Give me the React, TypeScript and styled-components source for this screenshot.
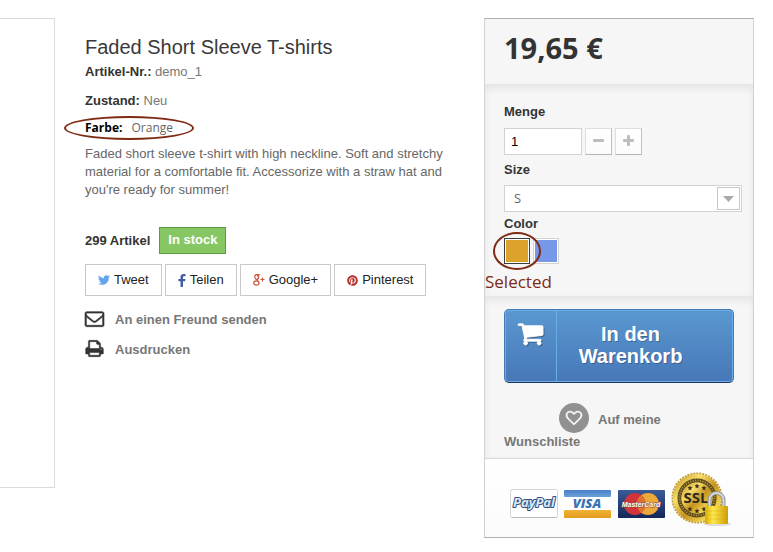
import React from "react";
import styled, { createGlobalStyle } from "styled-components";
import { FaTwitter, FaPinterest } from "react-icons/fa";

const GlobalStyle = createGlobalStyle`
  * { box-sizing: border-box; }
  body {
    margin: 0;
    background: #fff;
    color: #777;
    font: 13px/18px "Liberation Sans", Arial, sans-serif;
  }
  h1, p { margin: 0; }
  button, input, select { font: inherit; margin: 0; }
`;

const Page = styled.main`
  display: flex;
  align-items: flex-start;
  padding: 18px 19px 14px 0;
`;

const ImageFrame = styled.div`
  flex: 0 0 55px;
  height: 470px;
  margin-right: 30px;
  border: 1px solid #dbdbdb;
  border-left: 0;
`;

const Info = styled.section`
  flex: 1;
  min-width: 0;
  padding-top: 18px;
  margin-right: 30px;
`;

const Title = styled.h1`
  font-size: 20px;
  line-height: 22px;
  font-weight: 400;
  color: #3a3939;
  margin-bottom: 5px;
`;

const Fact = styled.p`
  margin-bottom: 11px;
  b { color: #333; }
`;

const ColorFact = styled.p`
  position: relative;
  width: fit-content;
  margin: -2px 0 8px;
  font: 12px/18px "Open Sans", sans-serif;
  color: #666;
  b { color: #000; margin-right: 6px; }
`;

const Ring = styled.span<{ $x: number; $y: number }>`
  position: absolute;
  inset: ${(p) => `-${p.$y}px -${p.$x}px`};
  z-index: 1;
  border: 2px solid #7e2a14;
  border-radius: 50%;
  pointer-events: none;
`;

const Description = styled.p`
  color: #666;
  margin-bottom: 28px;
`;

const Stock = styled.p`
  display: flex;
  align-items: center;
  gap: 9px;
  color: #333;
  font-weight: 700;
  margin-bottom: 10px;
`;

const StockBadge = styled.span`
  padding: 3px 8px 4px;
  line-height: 18px;
  color: #fff;
  background: #86c763;
  border: 1px solid #5f9a43;
`;

const ShareRow = styled.div`
  display: flex;
  flex-wrap: wrap;
  gap: 3px;
  margin-bottom: 15px;
`;

const ShareButton = styled.button<{ $tint: string }>`
  display: flex;
  align-items: center;
  gap: 4px;
  height: 32px;
  padding: 0 12px;
  color: #222;
  background: #fff;
  border: 1px solid #c9c9c9;
  svg { color: ${(p) => p.$tint}; }
`;

const ActionLink = styled.a`
  display: flex;
  align-items: center;
  gap: 11px;
  height: 18px;
  margin-bottom: 12px;
  color: #777;
  font-weight: 700;
  text-decoration: none;
  svg { color: #333; margin-bottom: 4px; }
`;

const BuyBox = styled.form`
  flex: 0 0 270px;
  background: #f6f6f6;
  border: 1px solid #d2d2d2;
  border-top-color: #b0b0b0;
  border-bottom-color: #b0b0b0;
`;

const Price = styled.p`
  padding: 9px 19px 16px;
  font: 700 29px/40px "Open Sans", sans-serif;
  color: #333;
`;

const Section = styled.div`
  padding: 13px 19px 0;
  box-shadow: inset 0 6px 6px rgba(0, 0, 0, 0.05), inset 0 0 6px rgba(0, 0, 0, 0.03);
`;

const Attributes = styled(Section)`
  padding-top: 19px;
`;

const Label = styled.label`
  display: block;
  margin-bottom: 7px;
  font-weight: 700;
  color: #333;
`;

const SizeLabel = styled(Label)`
  margin-bottom: 6px;
`;

const ColorLabel = styled(Label)`
  margin-bottom: 5px;
`;

const Quantity = styled.div`
  display: flex;
  gap: 3px;
  margin-bottom: 6px;
`;

const QuantityInput = styled.input`
  width: 78px;
  height: 27px;
  padding: 0 6px;
  color: #000;
  background: #fff;
  border: 1px solid #d2d2d2;
`;

const StepButton = styled.button`
  display: grid;
  place-items: center;
  width: 27px;
  height: 27px;
  padding: 0 0 2px;
  color: #bdbdbd;
  background: linear-gradient(#fff, #fbfbfb);
  border: 1px solid;
  border-color: #dedede #c1c1c1 #b5b5b5 #dedede;
`;

const SelectWrap = styled.div`
  position: relative;
  margin: 0 -8px 3px 0;
`;

const SizeSelect = styled.select`
  display: block;
  width: 100%;
  height: 27px;
  padding: 0 30px 2px 9px;
  appearance: none;
  color: #666;
  font: 13px/18px "Open Sans", sans-serif;
  background: #fff;
  border: 1px solid #d2d2d2;
  border-radius: 0;
`;

const SelectArrow = styled.span`
  position: absolute;
  top: 2px;
  right: 2px;
  display: grid;
  place-items: center;
  width: 23px;
  height: 23px;
  color: #a8a8a8;
  background: #fff;
  border: 1px solid #c8c8c8;
  pointer-events: none;
`;

const Swatches = styled.div`
  display: flex;
  gap: 3px;
  margin-bottom: 5px;
`;

const SwatchItem = styled.span`
  position: relative;
  display: flex;
`;

const Swatch = styled.button<{ $color: string; $selected?: boolean }>`
  width: 26px;
  height: 26px;
  padding: 1px;
  background: ${(p) => p.$color} content-box, #fff;
  border: 1px solid ${(p) => (p.$selected ? "#3d3d3d" : "#d2d2d2")};
`;

const Note = styled.p`
  margin-left: -19px;
  padding-bottom: 2px;
  font: 17px/25px "Open Sans", sans-serif;
  color: #7e2a14;
`;

const CartButton = styled.button`
  display: flex;
  width: 100%;
  padding: 0;
  text-align: center;
  color: #fff;
  font-size: 20px;
  line-height: 22px;
  font-weight: 700;
  text-shadow: 1px 1px rgba(0, 0, 0, 0.25);
  background: linear-gradient(#5a98d0, #4777b8);
  border: 1px solid #4379b5;
  border-bottom-color: #1b355c;
  border-radius: 5px;
  box-shadow: inset 0 0 0 1px #69aee6;
`;

const CartIconCell = styled.span`
  flex: 0 0 52px;
  padding: 10px 0 0;
  border-right: 1px solid #69aee6;
  svg { filter: drop-shadow(1px 1px rgba(0, 0, 0, 0.3)); }
`;

const CartText = styled.span`
  flex: 1;
  padding: 13px 38px 15px 9px;
`;

const Wishlist = styled.p`
  padding: 20px 0 7px;
  text-indent: 55px;
  a {
    color: #777;
    font-weight: 700;
    text-decoration: none;
  }
`;

const HeartBadge = styled.span`
  display: inline-grid;
  place-items: center;
  width: 30px;
  height: 30px;
  margin-right: 9px;
  text-indent: 0;
  vertical-align: -2px;
  color: #fff;
  background: #919191;
  border-radius: 50%;
`;

const Payments = styled.div`
  display: flex;
  align-items: center;
  gap: 5px;
  padding: 10px 19px 8px 25px;
  border-top: 1px solid #d8d8d8;
  background: linear-gradient(#fff, #fbfbfb);
`;

const Cards = styled.div`
  display: flex;
  gap: 5px;
  padding-top: 9px;
`;

const Glyph = ({ d, size, weight = 0 }: { d: string; size: number; weight?: number }) => (
  <svg
    width={size}
    height={size}
    viewBox="0 0 1792 1792"
    fill="currentColor"
    stroke="currentColor"
    strokeWidth={weight}
    overflow="visible"
    aria-hidden="true"
  >
    <path d={d} />
  </svg>
);

const HEART =
  "M1664 596q0-81-21.5-143t-55-98.5-81.5-59.5-94-31-98-8-112 25.5-110.5 64-86.5 72-60 61.5q-18 22-49 22t-49-22q-24-28-60-61.5t-86.5-72-110.5-64-112-25.5-98 8-94 31-81.5 59.5-55 98.5-21.5 143q0 168 187 355l581 560 580-559q188-188 188-356zm128 0q0 221-229 450l-623 600q-18 18-44 18t-44-18l-624-602q-10-8-27.5-26t-55.5-65.5-68-97.5-53.5-121-23.5-138q0-220 127-344t351-124q62 0 126.5 21.5t120 58 95.5 68.5 76 68q36-36 76-68t95.5-68.5 120-58 126.5-21.5q224 0 351 124t127 344z";
const ENVELOPE =
  "M1664 1504v-768q-32 36-69 66-268 206-426 338-51 43-83 67t-86.5 48.5-102.5 24.5h-2q-48 0-102.5-24.5t-86.5-48.5-83-67q-158-132-426-338-37-30-69-66v768q0 13 9.5 22.5t22.5 9.5h1472q13 0 22.5-9.5t9.5-22.5zm0-1051v-24.5l-.5-13-3-12.5-5.5-9-9-7.5-14-2.5h-1472q-13 0-22.5 9.5t-9.5 22.5q0 168 147 284 193 152 401 317 6 5 35 29.5t46 37.5 44.5 31.5 50.5 27.5 43 9h2q20 0 43-9t50.5-27.5 44.5-31.5 46-37.5 35-29.5q208-165 401-317 54-43 100.5-115.5t46.5-131.5zm128-37v1088q0 66-47 113t-113 47h-1472q-66 0-113-47t-47-113v-1088q0-66 47-113t113-47h1472q66 0 113 47t47 113z";
const PRINTER =
  "M448 1536h896v-256h-896v256zm0-640h896v-384h-160q-40 0-68-28t-28-68v-160h-640v640zm1152 64q0-26-19-45t-45-19-45 19-19 45 19 45 45 19 45-19 19-45zm128 0v416q0 13-9.5 22.5t-22.5 9.5h-224v160q0 40-28 68t-68 28h-960q-40 0-68-28t-28-68v-160h-224q-13 0-22.5-9.5t-9.5-22.5v-416q0-79 56.5-135.5t135.5-56.5h64v-544q0-40 28-68t68-28h672q40 0 88 20t76 48l152 152q28 28 48 76t20 88v256h64q79 0 135.5 56.5t56.5 135.5z";
const CART =
  "M704 1536q0 52-38 90t-90 38-90-38-38-90 38-90 90-38 90 38 38 90zm896 0q0 52-38 90t-90 38-90-38-38-90 38-90 90-38 90 38 38 90zm128-1088v512q0 24-16.5 42.5t-40.5 21.5l-1044 122q13 60 13 70 0 16-24 64h920q26 0 45 19t19 45-19 45-45 19h-1024q-26 0-45-19t-19-45q0-11 8-31.5t16-36 21.5-40 15.5-29.5l-177-823h-204q-26 0-45-19t-19-45 19-45 45-19h256q16 0 28.5 6.5t19.5 15.5 13 24.5 8 26 5.5 29.5 4.5 26h1201q26 0 45 19t19 45z";

const FacebookIcon = () => (
  <svg width="8" height="13" viewBox="0 0 8 13" fill="currentColor" aria-hidden="true">
    <path d="M7.500.2v2.100H6.200c-.9 0-1.200.5-1.200 1.200v1.400h2.400l-.3 2.300H5V13H2.500V7.200H.4V4.900h2.100V3.200C2.500 1.100 3.700 0 5.600 0c.9 0 1.600.1 1.900.2z" />
  </svg>
);

const GooglePlusIcon = () => (
  <svg width="12" height="12" viewBox="0 0 12 12" fill="none" stroke="currentColor" aria-hidden="true">
    <ellipse cx="3.6" cy="3" rx="1.7" ry="2.4" strokeWidth="1.2" transform="rotate(-14 3.6 3)" />
    <path d="M3.2.7h4M5 .8c1.2 1.4 1 3-.3 4.1-.8.7-.5 1.2.2 1.8" strokeWidth="1" />
    <ellipse cx="3.4" cy="9" rx="2.7" ry="2.1" strokeWidth="1.2" />
    <path d="M4 6.4l1.8 1.5M7.5 5.5h4M9.5 3.5v4" strokeWidth="1.1" />
  </svg>
);

const PayPalCard = () => (
  <svg width="49" height="30" viewBox="0 0 49 30" role="img" aria-label="PayPal">
    <rect x=".5" y=".5" width="47" height="28" rx="2" fill="#fff" stroke="#d3d6d9" />
    <path d="M2 28.5h45" stroke="#b8bcc1" />
    <text x="24" y="18" textAnchor="middle" fontFamily="Open Sans, sans-serif" fontSize="13" fontWeight="700" fontStyle="italic" fill="#dfe8f2" stroke="#2d4f84" strokeWidth="2" strokeLinejoin="round" paintOrder="stroke">
      PayPal
    </text>
  </svg>
);

const VisaCard = () => (
  <svg width="48" height="30" viewBox="0 0 48 30" role="img" aria-label="Visa">
    <defs>
      <linearGradient id="visaTop" x2="0" y2="1">
        <stop stopColor="#4a7fc6" />
        <stop offset="1" stopColor="#69a1d9" />
      </linearGradient>
      <linearGradient id="visaBottom" x2="0" y2="1">
        <stop stopColor="#f1b435" />
        <stop offset="1" stopColor="#e29b20" />
      </linearGradient>
    </defs>
    <rect y="1" width="47" height="28" rx="1" fill="#fff" />
    <rect y="1" width="47" height="7" rx="1" fill="url(#visaTop)" />
    <rect y="21" width="47" height="8" rx="1" fill="url(#visaBottom)" />
    <text x="23" y="19" textAnchor="middle" fontFamily="Open Sans, sans-serif" fontSize="13" fontWeight="800" fontStyle="italic" fill="#3a72b4">
      VISA
    </text>
  </svg>
);

const MasterCard = () => (
  <svg width="49" height="30" viewBox="0 0 49 30" role="img" aria-label="MasterCard">
    <defs>
      <linearGradient id="mcBlue" x2="0" y2="1">
        <stop stopColor="#3a5b98" />
        <stop offset="1" stopColor="#14265a" />
      </linearGradient>
    </defs>
    <rect x="1" y="1" width="47" height="28" rx="1" fill="url(#mcBlue)" />
    <circle cx="18" cy="15" r="11" fill="#d3343c" />
    <circle cx="31" cy="15" r="11" fill="#eda83a" />
    <path d="M24.5 6.1a11 11 0 0 1 0 17.8 11 11 0 0 1 0-17.8z" fill="#dd7132" />
    <text x="24" y="18" textAnchor="middle" fontFamily="Liberation Sans, sans-serif" fontSize="7" fontWeight="700" fontStyle="italic" fill="#fff" stroke="#8d4a35" strokeWidth="1" paintOrder="stroke">
      MasterCard
    </text>
  </svg>
);

const SslSeal = () => (
  <svg width="62" height="60" viewBox="0 0 62 60" role="img" aria-label="SSL">
    <defs>
      <linearGradient id="sealGold" x2="1" y2="1">
        <stop stopColor="#b78a1d" />
        <stop offset=".3" stopColor="#f7df6b" />
        <stop offset=".55" stopColor="#c4921c" />
        <stop offset=".8" stopColor="#f2d452" />
        <stop offset="1" stopColor="#a3740f" />
      </linearGradient>
      <linearGradient id="lockGold">
        <stop stopColor="#d9aa08" />
        <stop offset=".35" stopColor="#ffe94a" />
        <stop offset="1" stopColor="#cf9c05" />
      </linearGradient>
    </defs>
    <circle cx="26" cy="29" r="24.500" fill="none" stroke="#c09a2b" strokeWidth="2" strokeDasharray="2 1" />
    <circle cx="26" cy="29" r="24" fill="url(#sealGold)" />
    <circle cx="26" cy="29" r="17.500" fill="none" stroke="#5c4a1c" strokeWidth="4" />
    <circle cx="26" cy="29" r="17.500" fill="none" stroke="#b99a3f" strokeWidth="2" strokeDasharray="1 1.500" />
    <circle cx="26" cy="29" r="15.500" fill="url(#sealGold)" />
    <g fill="#40331a">
      {[[19, 19], [26, 17], [33, 19], [19, 40], [26, 42], [33, 40]].map(([x, y]) => (
        <path key={`${x}-${y}`} transform={`translate(${x} ${y})`} d="M0-2.500l.7 1.600 1.800.2-1.300 1.200.3 1.800L0 1.400l-1.500.9.3-1.800L-2.500-.7l1.800-.2z" />
      ))}
    </g>
    <text x="25" y="34" textAnchor="middle" fontFamily="Open Sans, sans-serif" fontSize="15" fontWeight="700" fill="#302a1e" stroke="#d9b844" strokeWidth="1" paintOrder="stroke">
      SSL
    </text>
    <ellipse cx="46" cy="55" rx="14" ry="2" fill="#000" opacity=".12" />
    <path d="M38.500 38v-7a7 7 0 0 1 14 0v7" fill="none" stroke="#8f9093" strokeWidth="4" />
    <path d="M38.500 38v-7a7 7 0 0 1 14 0v7" fill="none" stroke="#d5d6d8" strokeWidth="2" />
    <rect x="34" y="37" width="23" height="18" rx="1" fill="url(#lockGold)" />
    <path d="M34 42h23M34 46h23M34 50h23" stroke="#c89c12" opacity=".3" />
  </svg>
);

export default function App() {
  const [quantity, setQuantity] = React.useState(1);
  return (
    <>
      <GlobalStyle />
      <Page>
        <ImageFrame />
        <Info>
          <Title>Faded Short Sleeve T-shirts</Title>
          <Fact><b>Artikel-Nr.:</b> demo_1</Fact>
          <Fact><b>Zustand:</b> Neu</Fact>
          <ColorFact>
            <b>Farbe:</b> Orange
            <Ring $x={21} $y={3} />
          </ColorFact>
          <Description>
            Faded short sleeve t-shirt with high neckline. Soft and stretchy material for a
            comfortable fit. Accessorize with a straw hat and you're ready for summer!
          </Description>
          <Stock>
            299 Artikel <StockBadge>In stock</StockBadge>
          </Stock>
          <ShareRow>
            <ShareButton type="button" $tint="#63a5ec"><FaTwitter size={12} />Tweet</ShareButton>
            <ShareButton type="button" $tint="#435f9f"><FacebookIcon />Teilen</ShareButton>
            <ShareButton type="button" $tint="#cf5341"><GooglePlusIcon />Google+</ShareButton>
            <ShareButton type="button" $tint="#b5312c"><FaPinterest size={11} />Pinterest</ShareButton>
          </ShareRow>
          <ActionLink href="#send"><Glyph d={ENVELOPE} size={19} weight={60} />An einen Freund senden</ActionLink>
          <ActionLink href="#print"><Glyph d={PRINTER} size={19} weight={50} />Ausdrucken</ActionLink>
        </Info>

        <BuyBox onSubmit={(e) => e.preventDefault()}>
          <Price>19,65 €</Price>
          <Attributes>
            <Label htmlFor="quantity">Menge</Label>
            <Quantity>
              <QuantityInput
                id="quantity"
                value={quantity}
                onChange={(e) => setQuantity(Number(e.target.value) || 1)}
              />
              <StepButton type="button" aria-label="Weniger" onClick={() => setQuantity(Math.max(1, quantity - 1))}>
                <svg width="11" height="11" viewBox="0 0 11 11" fill="currentColor"><rect y="4" width="11" height="3" rx="1" /></svg>
              </StepButton>
              <StepButton type="button" aria-label="Mehr" onClick={() => setQuantity(quantity + 1)}>
                <svg width="11" height="11" viewBox="0 0 11 11" fill="currentColor"><rect y="4" width="11" height="3" rx="1" /><rect x="4" width="3" height="11" rx="1" /></svg>
              </StepButton>
            </Quantity>
            <SizeLabel htmlFor="size">Size</SizeLabel>
            <SelectWrap>
              <SizeSelect id="size" defaultValue="S">
                <option>S</option>
                <option>M</option>
                <option>L</option>
              </SizeSelect>
              <SelectArrow>
                <svg width="11" height="6" viewBox="0 0 11 6" fill="currentColor"><path d="M0 0h11L5.500 6z" /></svg>
              </SelectArrow>
            </SelectWrap>
            <ColorLabel as="p">Color</ColorLabel>
            <Swatches>
              <SwatchItem>
                <Swatch type="button" aria-label="Orange" aria-pressed="true" $color="linear-gradient(#dda22b, #dda22b)" $selected />
                <Ring $x={11} $y={6} />
              </SwatchItem>
              <SwatchItem>
                <Swatch type="button" aria-label="Blau" aria-pressed="false" $color="linear-gradient(#7797e8, #7797e8)" />
              </SwatchItem>
            </Swatches>
            <Note>Selected</Note>
          </Attributes>
          <Section>
            <CartButton type="submit">
              <CartIconCell><Glyph d={CART} size={27} weight={60} /></CartIconCell>
              <CartText>In den Warenkorb</CartText>
            </CartButton>
            <Wishlist>
              <a href="#wishlist">
                <HeartBadge><Glyph d={HEART} size={16} weight={70} /></HeartBadge>Auf meine Wunschliste
              </a>
            </Wishlist>
          </Section>
          <Payments>
            <Cards>
              <PayPalCard />
              <VisaCard />
              <MasterCard />
            </Cards>
            <SslSeal />
          </Payments>
        </BuyBox>
      </Page>
    </>
  );
}
